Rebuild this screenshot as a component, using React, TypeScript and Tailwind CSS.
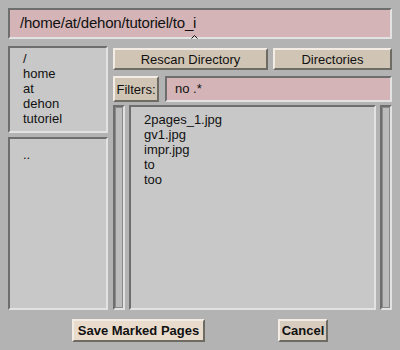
import React from 'react'

const font = { fontFamily: '"Liberation Sans", Arial, sans-serif' }

// sunken = dark top/left, light bottom/right
const sunken = 'border-2 border-t-[#6e6e6e] border-l-[#6e6e6e] border-b-[#e2e2e2] border-r-[#e2e2e2]'
const raised = 'border-2 border-t-[#f2ece4] border-l-[#f2ece4] border-b-[#6e6a64] border-r-[#6e6a64]'

function Scrollbar() {
  return (
    <div className={`w-[12px] h-full bg-[#b4b4b4] ${sunken}`}>
      <div className="h-full border border-[#8a8a8a] bg-[#bcbcbc]" />
    </div>
  )
}

export default function App() {
  const dirs = ['/', 'home', 'at', 'dehon', 'tutoriel']
  const files = ['2pages_1.jpg', 'gv1.jpg', 'impr.jpg', 'to', 'too']

  return (
    <div className="w-[400px] h-[350px] bg-[#b3b3b3] p-2 flex flex-col text-[#111]" style={font}>
      {/* path entry */}
      <div className={`h-[31px] bg-[#d4b4b6] ${sunken} flex items-center pl-[10px] text-[15px] tracking-[-0.2px]`}>
        <span>/home/at/dehon/tutoriel/to_</span>
        <span className="relative">
          i
          <svg className="absolute left-[-2px] bottom-[-4px]" width="7" height="4" viewBox="0 0 7 4">
            <path d="M0.5 3.5 L3.5 0.5 L6.5 3.5" fill="none" stroke="#111" strokeWidth="1" />
          </svg>
        </span>
      </div>

      <div className="flex gap-[5px] mt-[7px] h-[264px]">
        {/* left column */}
        <div className="w-[100px] flex flex-col gap-[4px]">
          <div className={`h-[87px] bg-[#c8c8c8] ${sunken} pl-[13px] pt-[3px] text-[13px] leading-[15px]`}>
            {dirs.map((d) => (
              <div key={d}>{d}</div>
            ))}
          </div>
          <div className={`flex-1 bg-[#c8c8c8] ${sunken} pl-[13px] pt-[8px] text-[13px] leading-[15px]`}>..</div>
        </div>

        {/* right column */}
        <div className="flex-1 flex flex-col mt-[2px]">
          <div className="flex gap-[5px] h-[22px]">
            <button className={`w-[155px] bg-[#d0c4b4] ${raised} text-[13px] leading-none`}>Rescan Directory</button>
            <button className={`flex-1 bg-[#d0c4b4] ${raised} text-[13px] leading-none`}>Directories</button>
          </div>
          <div className="flex gap-[6px] h-[26px] mt-[6px]">
            <button className={`w-[46px] bg-[#d0c4b4] ${raised} text-[13px] leading-none`}>Filters:</button>
            <div className={`flex-1 bg-[#d4b4b6] ${sunken} flex items-center pl-[8px] text-[13px]`}>no .*</div>
          </div>
          <div className="flex gap-[4px] mt-[3px] flex-1">
            <Scrollbar />
            <div className={`flex-1 bg-[#c8c8c8] ${sunken} pl-[13px] pt-[5px] text-[13px] leading-[15px]`}>
              {files.map((f) => (
                <div key={f}>{f}</div>
              ))}
            </div>
            <Scrollbar />
          </div>
        </div>
      </div>

      {/* bottom buttons */}
      <div className="flex mt-[9px] h-[23px]">
        <button className={`ml-[64px] w-[133px] bg-[#eadccc] ${raised} text-[13px] font-bold leading-none`}>
          Save Marked Pages
        </button>
        <button className={`ml-[73px] w-[50px] bg-[#d8ccbe] ${raised} text-[13px] font-bold leading-none`}>
          Cancel
        </button>
      </div>
    </div>
  )
}
